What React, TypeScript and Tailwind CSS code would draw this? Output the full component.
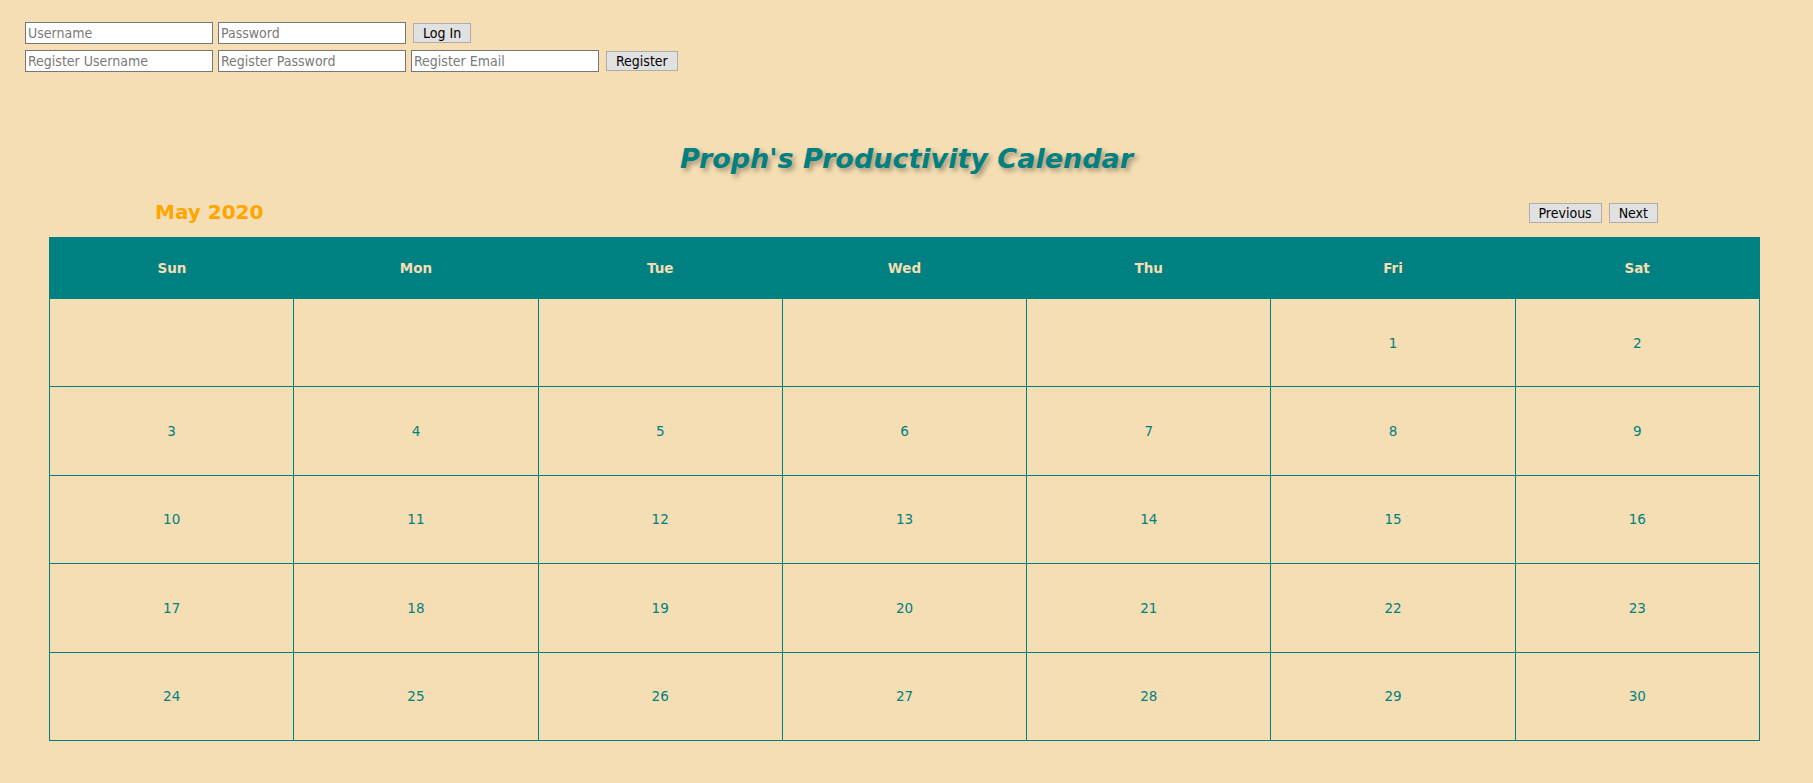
const days = ["Sun", "Mon", "Tue", "Wed", "Thu", "Fri", "Sat"]

// May 2020 starts on a Friday
const weeks: (number | null)[][] = [
  [null, null, null, null, null, 1, 2],
  [3, 4, 5, 6, 7, 8, 9],
  [10, 11, 12, 13, 14, 15, 16],
  [17, 18, 19, 20, 21, 22, 23],
  [24, 25, 26, 27, 28, 29, 30],
]

const inputCls =
  "w-[188px] h-[22px] bg-white border border-[#767676] px-[2px] text-[14px] text-black placeholder:text-[#7a7a7a] outline-none font-['DejaVu_Sans_Condensed','Liberation_Sans',sans-serif]"
const btnCls =
  "h-[20px] px-[9px] bg-[#e1e1e1] border border-[#adadad] text-[14px] text-black leading-none font-['DejaVu_Sans_Condensed','Liberation_Sans',sans-serif]"

function AuthForms() {
  return (
    <div className="flex flex-col gap-[6px] pl-[25px] pt-[22px]">
      <div className="flex items-center">
        <input className={inputCls} placeholder="Username" />
        <input className={inputCls + " ml-[5px]"} placeholder="Password" type="password" />
        <button className={btnCls + " ml-[7px]"}>Log In</button>
      </div>
      <div className="flex items-center">
        <input className={inputCls} placeholder="Register Username" />
        <input className={inputCls + " ml-[5px]"} placeholder="Register Password" type="password" />
        <input className={inputCls + " ml-[5px]"} placeholder="Register Email" />
        <button className={btnCls + " ml-[7px]"}>Register</button>
      </div>
    </div>
  )
}

export default function App() {
  return (
    <div className="min-h-screen bg-[#f5deb3] font-['DejaVu_Sans','Verdana',sans-serif] pb-[40px]">
      <AuthForms />

      {/* Title */}
      <h1 className="mt-[71px] text-center text-[27px] leading-[32px] font-bold italic text-[#008080] [text-shadow:3px_3px_5px_rgba(0,0,0,0.35)]">
        Proph's Productivity Calendar
      </h1>

      {/* Month + nav */}
      <div className="mx-auto mt-[25px] w-[1503px] h-[24px] flex items-center justify-between">
        <span className="text-[20px] leading-[24px] font-bold text-[#ffa500]">May 2020</span>
        <div className="flex gap-[7px] mt-[2px]">
          <button className={btnCls}>Previous</button>
          <button className={btnCls}>Next</button>
        </div>
      </div>

      {/* Calendar */}
      <table className="mt-[13px] ml-[49px] w-[1711px] table-fixed border-collapse border border-[#008080]">
        <thead>
          <tr className="bg-[#008080]">
            {days.map((d) => (
              <th key={d} className="h-[61px] text-[13.5px] font-bold text-[#f5deb3] text-center align-middle">
                {d}
              </th>
            ))}
          </tr>
        </thead>
        <tbody>
          {weeks.map((w, i) => (
            <tr key={i}>
              {w.map((n, j) => (
                <td
                  key={j}
                  className="h-[88.4px] border border-[#008080] text-center align-middle text-[13.5px] text-[#008080]"
                >
                  {n ?? ""}
                </td>
              ))}
            </tr>
          ))}
        </tbody>
      </table>
    </div>
  )
}
